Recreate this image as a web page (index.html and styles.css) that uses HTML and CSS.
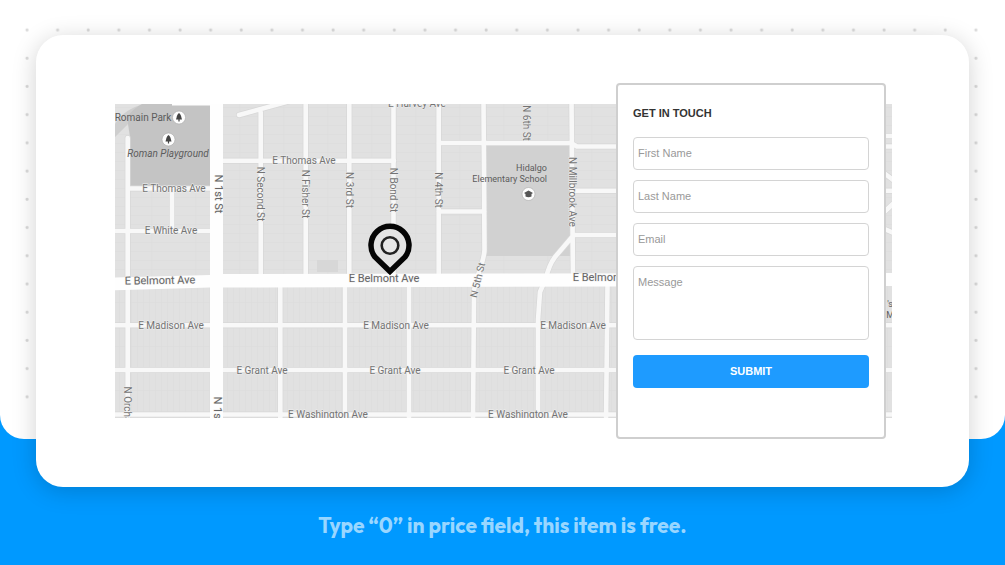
FILE: index.html
```html
<!DOCTYPE html>
<html lang="en">
<head>
    <meta charset="UTF-8">
    <meta name="viewport" content="width=device-width, initial-scale=1.0">
    <title>Get in Touch</title>
    <link rel="stylesheet" href="styles.css">
</head>
<body>
    <div class="page">
        <div class="backdrop"></div>

        <main class="card">
            <svg class="map" viewBox="115 104 777 314" preserveAspectRatio="xMinYMin slice" role="img" aria-label="Street map">
                <defs>
                    <pattern id="lotsTop" width="44" height="9" patternUnits="userSpaceOnUse">
                        <path d="M0 8.5H44M20 0V9" stroke="#dbdbdb" stroke-width="0.6"/>
                    </pattern>
                    <pattern id="lotsBottom" width="6" height="22" patternUnits="userSpaceOnUse" y="281">
                        <path d="M5.5 0V22M0 21.5H6" stroke="#dbdbdb" stroke-width="0.6"/>
                    </pattern>
                    <!-- side streets, drawn twice: casing and fill -->
                    <g id="streets" fill="none" stroke-linecap="round" stroke-linejoin="round">
                        <path d="M127.7 138V425M130 188.5H212M172 188V231M110 231H212"/>
                        <path d="M239 115L290 101M260.7 112V280M305.7 100V280M349.3 100V280M393.5 100V280M438.7 100V280"/>
                        <path d="M220 160.7H394M439 143H571L577 146.5H900M439 211.5H484"/>
                        <path d="M483.5 100L484.5 250Q484 258 479 272L474 290L473 425"/>
                        <path d="M571.5 100L573 280M573 190.7H900M573 235H640M572 237L555 257Q549 265 546 278L540 292L538 320V425"/>
                        <path d="M110 325.3H900M110 370H900M110 414.5H900"/>
                        <path d="M280.3 285V425M345 285V425M409 285V425M607.5 285L606 425"/>
                        <path d="M880 136H900M880 170L896 182M880 216L896 201M880 227L896 234"/>
                    </g>
                    <g id="tree">
                        <circle r="6.5" fill="#fdfdfd" stroke="#aaa" stroke-width="0.6"/>
                        <path d="M0 -4.5C1.6 -3 2.3 -1.5 2.3 -0.5L3 2H0.6V4H-0.6V2H-3L-2.3 -0.5C-2.3 -1.5 -1.6 -3 0 -4.5Z" fill="#444"/>
                    </g>
                </defs>

                <rect x="115" y="104" width="777" height="314" fill="#e1e1e1"/>
                <rect x="115" y="104" width="777" height="174" fill="url(#lotsTop)"/>
                <rect x="115" y="281" width="777" height="137" fill="url(#lotsBottom)"/>
                <path d="M115 137V124Q125 108 145 104H172V106L128 124Z" fill="#cecece"/>
                <path d="M142 104H210V186H130V137L128 124V116Q134 108 142 104Z" fill="#c4c4c4"/>
                <rect x="486" y="146" width="84" height="110" fill="#d1d1d1"/>
                <rect x="317" y="260" width="21" height="12" fill="#d7d7d7"/>

                <use href="#streets" stroke="#d7d7d7" stroke-width="6"/>
                <use href="#streets" stroke="#f8f8f8" stroke-width="4.6"/>
                <path d="M172 104H223V418H210V105.500H172Z" fill="#fefefe"/>
                <path d="M110 277.5L210 275L223 274L900 273V286L617 286.5L223 287.5L210 287.5L110 290.5Z" fill="#fefefe"/>

                <g class="street">
                    <text x="143" y="121" class="park">Romain Park</text>
                    <text x="168" y="157" class="park italic">Roman Playground</text>
                    <text x="174" y="192">E Thomas Ave</text>
                    <text x="304" y="164">E Thomas Ave</text>
                    <text x="171" y="234">E White Ave</text>
                    <text x="417" y="107">E Harvey Ave</text>
                    <text x="171" y="329">E Madison Ave</text>
                    <text x="396" y="329">E Madison Ave</text>
                    <text x="573" y="329">E Madison Ave</text>
                    <text x="262" y="374">E Grant Ave</text>
                    <text x="395" y="374">E Grant Ave</text>
                    <text x="529" y="374">E Grant Ave</text>
                    <text x="328" y="418">E Washington Ave</text>
                    <text x="528" y="418">E Washington Ave</text>
                    <text transform="translate(257 194) rotate(90)">N Second St</text>
                    <text transform="translate(302 194) rotate(90)">N Fisher St</text>
                    <text transform="translate(346 190) rotate(90)">N 3rd St</text>
                    <text transform="translate(390 190) rotate(90)">N Bond St</text>
                    <text transform="translate(435 190) rotate(90)">N 4th St</text>
                    <text transform="translate(523 123) rotate(90)">N 6th St</text>
                    <text transform="translate(569 192) rotate(90)">N Millbrook Ave</text>
                    <text transform="translate(481 281) rotate(-76)">N 5th St</text>
                    <text transform="translate(124 409) rotate(90)">N Orchard</text>
                </g>
                <g class="avenue">
                    <text transform="translate(160 284) rotate(-1)">E Belmont Ave</text>
                    <text x="384" y="282">E Belmont Ave</text>
                    <text x="608" y="281">E Belmont Ave</text>
                    <text transform="translate(215 194) rotate(90)">N 1st St</text>
                    <text transform="translate(214 416) rotate(90)">N 1st St</text>
                </g>
                <g class="place">
                    <text x="547" y="171">Hidalgo</text>
                    <text x="547" y="182">Elementary School</text>
                    <text x="893" y="307">'s</text>
                    <text x="894" y="318">M</text>
                </g>

                <use href="#tree" x="179" y="117.5"/>
                <use href="#tree" x="168.5" y="139.5"/>
                <circle cx="528.5" cy="194" r="6.5" fill="#fdfdfd" stroke="#aaa" stroke-width="0.6"/>
                <path d="M524 193L528.5 190.5L533 193L531.5 194V196.5Q528.5 198 525.5 196.5V194Z" fill="#555"/>

                <!-- pin -->
                <path d="M390 271.5L375 257A19 19 0 1 1 405 257Z" fill="#e3e3e3" stroke="#050505" stroke-width="5.5"/>
                <circle cx="390" cy="245.5" r="8.3" fill="#e8e8e8" stroke="#222" stroke-width="2.6"/>
            </svg>

            <form class="contact-form">
                <h1>GET IN TOUCH</h1>
                <input type="text" placeholder="First Name" aria-label="First Name">
                <input type="text" placeholder="Last Name" aria-label="Last Name">
                <input type="email" placeholder="Email" aria-label="Email">
                <textarea placeholder="Message" aria-label="Message"></textarea>
                <button type="submit">SUBMIT</button>
            </form>
        </main>

        <p class="note">Type “0” in price field, this item is free.</p>
    </div>
</body>
</html>
```
FILE: styles.css
```css
* {
    box-sizing: border-box;
}

body {
    margin: 0;
    background-color: #0099ff;
    font-family: "Liberation Sans", Arial, sans-serif;
}

.page {
    display: grid;
    grid-template-rows: auto 48px auto;
}

/* white sheet with a dotted grid behind the card */
.backdrop {
    grid-area: 1 / 1;
    padding: 16px 14px 28px 12px;
    border-radius: 0 0 24px 24px;
    background-image: radial-gradient(circle, #d8d8d8 1px, transparent 2px), linear-gradient(#fff, #fff);
    background-size: 30px 28px, auto;
    background-repeat: space, repeat;
    background-origin: content-box, border-box;
    background-clip: content-box, border-box;
}

.card {
    grid-area: 1 / 1 / 3 / 2;
    display: grid;
    margin: 35px 36px 0;
    padding: 48px 77px 48px 79px;
    border-radius: 27px;
    background-color: #fff;
    box-shadow: 0 4px 24px rgba(0, 0, 0, 0.18);
}

.map {
    grid-area: 1 / 1;
    align-self: center;
    width: 100%;
    height: 314px;
}

.map text {
    font-family: Roboto, sans-serif;
    text-anchor: middle;
    fill: #747474;
    stroke: #efefef;
    stroke-width: 1px;
    paint-order: stroke;
}

.street text {
    font-size: 10px;
}

.street .park {
    fill: #5c5c5c;
    stroke: none;
}

.street .italic {
    font-style: italic;
}

.avenue text {
    font-size: 11px;
    fill: #666;
}

.place text {
    font-size: 9px;
    fill: #5c5c5c;
    text-anchor: end;
    stroke: none;
}

.contact-form {
    grid-area: 1 / 1;
    justify-self: end;
    display: flex;
    flex-direction: column;
    gap: 10px;
    width: 270px;
    margin-right: 6px;
    padding: 22px 15px 49px;
    border: 2px solid #cfcfcf;
    border-radius: 4px;
    background-color: #fff;
}

.contact-form h1 {
    margin: 0 0 8px;
    color: #333;
    font-size: 11px;
    line-height: 12px;
}

.contact-form input,
.contact-form textarea {
    width: 100%;
    padding: 0 4px 2px;
    border: 1px solid #d4d4d4;
    border-radius: 4px;
    background-color: #fff;
    font-family: inherit;
    font-size: 11px;
}

.contact-form input {
    height: 33px;
}

.contact-form textarea {
    display: block;
    height: 74px;
    padding: 8px 4px;
    line-height: 14px;
    resize: none;
}

.contact-form ::placeholder {
    color: #999;
}

.contact-form button {
    height: 33px;
    margin-top: 5px;
    padding: 0 0 2px;
    border: none;
    border-radius: 4px;
    background-color: #1e9bff;
    color: #fff;
    font-family: inherit;
    font-size: 11px;
    font-weight: bold;
    cursor: pointer;
}

.note {
    margin: 0;
    padding: 24px 0;
    color: #99d6ff;
    font-family: Outfit, Lato, sans-serif;
    font-size: 21px;
    font-weight: 700;
    line-height: 28px;
    text-align: center;
}
```
